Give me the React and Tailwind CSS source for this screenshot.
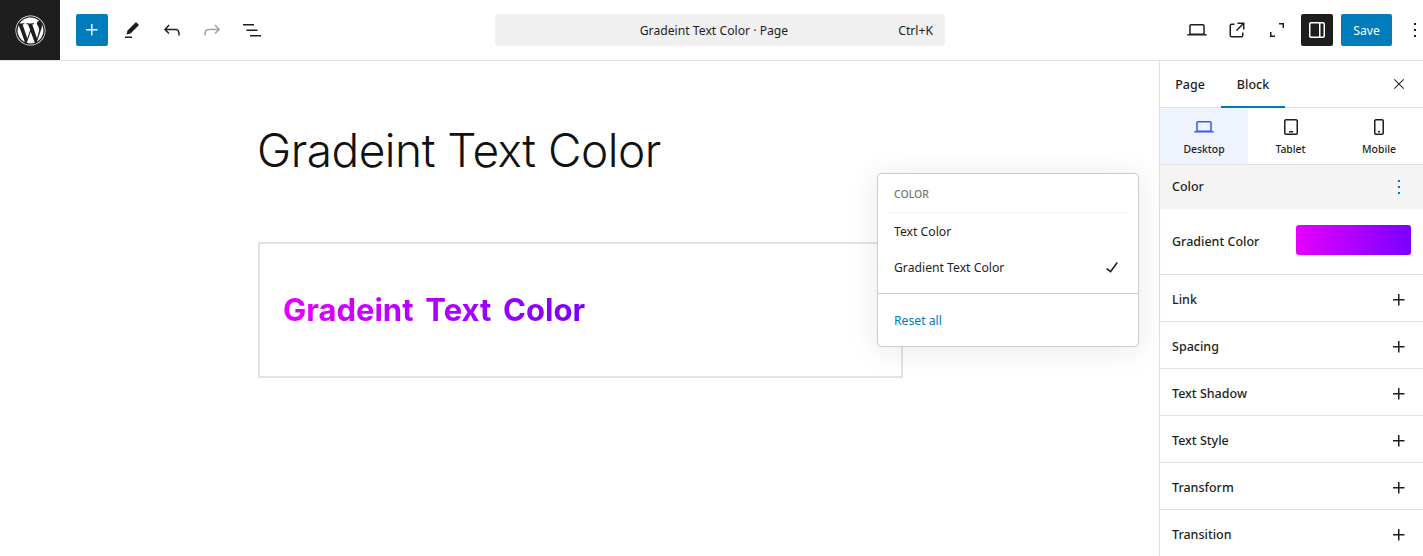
import { FaWordpress } from 'react-icons/fa'

function Icon({ d, size = 24, className = '' }) {
  return (
    <svg width={size} height={size} viewBox="0 0 24 24" fill="currentColor" aria-hidden="true" className={className}>
      <path d={d} />
    </svg>
  )
}

const ICONS = {
  plus: 'M11 12.5V17.5H12.5V12.5H17.5V11H12.5V6H11V11H6V12.5H11Z',
  pencil: 'm19 7-3-3-8.5 8.5-1 4 4-1L19 7Zm-7 11.5H5V20h7v-1.5Z',
  undo: 'M18.3 11.7c-.6-.6-1.4-.9-2.3-.9H6.7l2.9-3.3-1.1-1-4.5 5L8.5 16l1-1-2.7-2.7H16c.5 0 .9.2 1.3.5 1 1 1 3.4 1 4.5v.3h1.5v-.2c0-1.5 0-4.3-1.5-5.7z',
  redo: 'M15.6 6.5l-1.1 1 2.9 3.3H8c-.9 0-1.7.3-2.3.9-1.4 1.5-1.4 4.2-1.4 5.6v.2h1.5v-.3c0-1.1 0-3.5 1-4.5.3-.3.7-.5 1.3-.5h9.2L14.5 15l1.1 1.1 4.6-4.6-4.6-5z',
  list: 'M3 6h11v1.5H3V6Zm3.5 5.5h11V13h-11v-1.5ZM21 17H10v1.5h11V17Z',
  laptop: 'M20.5 16h-.7V8c0-1.1-.9-2-2-2H6.2c-1.1 0-2 .9-2 2v8h-.7c-.8 0-1.5.7-1.5 1.5h20c0-.8-.7-1.5-1.5-1.5zM5.7 8c0-.3.2-.5.5-.5h11.6c.3 0 .5.2.5.5v7.6H5.7V8z',
  external: 'M19.5 4.5h-7V6h4.44l-5.97 5.97 1.06 1.06L18 7.06v4.44h1.5v-7Zm-13 1a2 2 0 0 0-2 2v10a2 2 0 0 0 2 2h10a2 2 0 0 0 2-2v-3H17v3a.5.5 0 0 1-.5.5h-10a.5.5 0 0 1-.5-.5v-10a.5.5 0 0 1 .5-.5h3V5.5h-3Z',
  fullscreen: 'M14 5h5v5h-1.5V6.5H14V5ZM5 14h1.5v3.5H10V19H5v-5Z',
  sidebar: 'M4 6v12c0 1.1.9 2 2 2h12c1.1 0 2-.9 2-2V6c0-1.1-.9-2-2-2H6c-1.1 0-2 .9-2 2zm1.5 12V6c0-.3.2-.5.5-.5h8v13H6c-.3 0-.5-.2-.5-.5zm13 0c0 .3-.2.5-.5.5h-2.5v-13H18c.3 0 .5.2.5.5v12z',
  more: 'M13 19h-2v-2h2v2zm0-6h-2v-2h2v2zm0-6h-2V5h2v2z',
  close: 'm13.06 12 6.47-6.47-1.06-1.06L12 10.94 5.53 4.47 4.47 5.53 10.94 12l-6.47 6.47 1.06 1.06L12 13.06l6.47 6.47 1.06-1.06L13.06 12Z',
  check: 'M16.7 7.1l-6.3 8.5-3.3-2.5-.9 1.2 4.5 3.4L17.9 7.9z',
  tablet: 'M17 4H7c-1.1 0-2 .9-2 2v12c0 1.1.9 2 2 2h10c1.1 0 2-.9 2-2V6c0-1.1-.9-2-2-2zm.5 14c0 .3-.2.5-.5.5H7c-.3 0-.5-.2-.5-.5V6c0-.3.2-.5.5-.5h10c.3 0 .5.2.5.5v12zm-7.5-.5h4V16h-4v1.5z',
  mobile: 'M15 4H9c-1.1 0-2 .9-2 2v12c0 1.1.9 2 2 2h6c1.1 0 2-.9 2-2V6c0-1.1-.9-2-2-2zm.5 14c0 .3-.2.5-.5.5H9c-.3 0-.5-.2-.5-.5V6c0-.3.2-.5.5-.5h6c.3 0 .5.2.5.5v12zm-4.5-.5h2V16h-2v1.5z',
}

function ToolButton({ icon, className = 'text-[#1e1e1e]' }) {
  return (
    <button className={`flex h-8 w-8 shrink-0 items-center justify-center ${className}`}>
      <Icon d={ICONS[icon]} />
    </button>
  )
}

function TopBar() {
  return (
    <header className="flex h-[61px] shrink-0 items-center overflow-hidden border-b border-[#e0e0e0] bg-white">
      <div className="flex h-[60px] w-[60px] shrink-0 items-center justify-center bg-[#1e1e1e] text-white">
        <FaWordpress size={31} />
      </div>
      <button className="ml-4 flex h-8 w-8 shrink-0 items-center justify-center rounded-[2px] bg-[#007cba] text-white">
        <Icon d={ICONS.plus} />
      </button>
      <div className="ml-2 flex shrink-0 gap-2">
        <ToolButton icon="pencil" />
        <ToolButton icon="undo" />
        <ToolButton icon="redo" className="text-[#a3a3a3]" />
        <ToolButton icon="list" />
      </div>
      <div className="relative ml-[227px] flex h-8 w-[450px] shrink-0 items-center justify-center rounded-[4px] bg-[#f0f0f0] pr-3 pt-0.5 text-[12.2px] text-[#1e1e1e]">
        <span>Gradeint Text Color · Page</span>
        <span className="absolute right-3">Ctrl+K</span>
      </div>
      <div className="ml-[236px] flex shrink-0 gap-2">
        <ToolButton icon="laptop" />
        <ToolButton icon="external" />
        <ToolButton icon="fullscreen" />
        <button className="flex h-8 w-8 items-center justify-center rounded-[2px] bg-[#1e1e1e] text-white">
          <Icon d={ICONS.sidebar} />
        </button>
      </div>
      <button className="ml-2 flex h-8 w-[51px] shrink-0 items-center justify-center rounded-[2px] bg-[#007cba] pt-0.5 text-[12.2px] text-white">
        Save
      </button>
      <div className="ml-[11px] shrink-0 text-[#1e1e1e]">
        <Icon d={ICONS.more} />
      </div>
    </header>
  )
}

function ColorMenu() {
  return (
    <div className="absolute left-[877px] top-[173px] z-10 w-[262px] rounded-[4px] border border-[#cccccc] bg-white text-[12.2px] text-[#1e1e1e] shadow-[0_3px_30px_rgba(25,30,35,0.1)]">
      <div className="mx-2.5 flex h-[39px] items-center border-b border-[#f5f5f5] px-1.5 pt-1 text-[10.5px] font-medium text-[#757575]">
        COLOR
      </div>
      <div className="flex h-9 items-center px-4 pt-0.5">Text Color</div>
      <div className="flex h-9 items-center justify-between pl-4 pr-[14px]">
        <span className="pt-0.5">Gradient Text Color</span>
        <Icon d={ICONS.check} />
      </div>
      <div className="mt-2 flex h-[53px] items-center border-t border-[#cccccc] px-4 pt-0.5 text-[#007cba]">Reset all</div>
    </div>
  )
}

function DeviceTab({ icon, label, active }) {
  return (
    <div className={`flex flex-col items-center justify-center pt-px ${active ? 'bg-[#eff3fe]' : ''}`}>
      <Icon d={ICONS[icon]} className={active ? 'text-[#3858e9]' : 'text-[#1e1e1e]'} />
      <span className="mt-[3px] text-[10.4px] font-medium text-[#1e1e1e]">{label}</span>
    </div>
  )
}

function PanelRow({ label }) {
  return (
    <div className="flex h-[47px] shrink-0 items-center justify-between border-b border-[#e0e0e0] px-3 pt-1">
      <span className="text-[12.5px] font-medium text-[#1e1e1e]">{label}</span>
      <Icon d={ICONS.plus} className="text-[#1e1e1e]" />
    </div>
  )
}

function Sidebar() {
  return (
    <aside className="flex w-[264px] shrink-0 flex-col overflow-hidden border-l border-[#e0e0e0] bg-white">
      <div className="flex h-[47px] shrink-0 items-center border-b border-[#e0e0e0] text-[12.5px] font-medium text-[#1e1e1e]">
        <div className="flex h-[46px] w-[60px] items-center justify-center pt-0.5">Page</div>
        <div className="relative ml-px flex h-[46px] w-[64px] items-center justify-center pt-0.5">
          Block
          <span className="absolute -bottom-px left-0 h-0.5 w-full bg-[#007cba]" />
        </div>
        <div className="ml-auto mr-4 flex">
          <Icon d={ICONS.close} size={16} />
        </div>
      </div>
      <div className="grid h-[57px] shrink-0 grid-cols-[88px_85px_92px] border-b border-[#e0e0e0]">
        <DeviceTab icon="laptop" label="Desktop" active />
        <DeviceTab icon="tablet" label="Tablet" />
        <DeviceTab icon="mobile" label="Mobile" />
      </div>
      <div className="flex h-[44px] shrink-0 items-center justify-between bg-[#f4f4f4] px-3 text-[12.5px] font-medium text-[#1e1e1e]">
        <span>Color</span>
        <Icon d={ICONS.more} className="text-[#007cba]" />
      </div>
      <div className="flex h-[66px] shrink-0 items-center justify-between border-b border-[#e0e0e0] px-3">
        <span className="pt-0.5 text-[12.5px] font-medium text-[#1e1e1e]">Gradient Color</span>
        <div className="mb-1 h-[30px] w-[115px] rounded-[3px] bg-[linear-gradient(90deg,#e600ff,#7a00ff)]" />
      </div>
      {['Link', 'Spacing', 'Text Shadow', 'Text Style', 'Transform', 'Transition'].map(label => (
        <PanelRow key={label} label={label} />
      ))}
    </aside>
  )
}

export default function App() {
  return (
    <div className="relative flex h-[556px] flex-col overflow-hidden bg-white font-['Noto_Sans',sans-serif]">
      <TopBar />
      <div className="flex min-h-0 flex-1">
        <main className="min-w-0 flex-1 pl-[258px] pt-[59px]">
          <h1 className="-ml-px font-['Inter',sans-serif] text-[46px] font-light leading-[60px] tracking-[-0.5px] text-[#111111]">
            Gradeint Text Color
          </h1>
          <div className="mt-[62px] flex h-[136px] w-[645px] items-center border-2 border-[#e2e2e2] pl-[23px]">
            <span className="bg-[linear-gradient(90deg,#e600ff,#7a00ff)] bg-clip-text font-['Inter',sans-serif] text-[31px] font-bold text-transparent [word-spacing:4.5px]">
              Gradeint Text Color
            </span>
          </div>
        </main>
        <Sidebar />
      </div>
      <ColorMenu />
    </div>
  )
}
